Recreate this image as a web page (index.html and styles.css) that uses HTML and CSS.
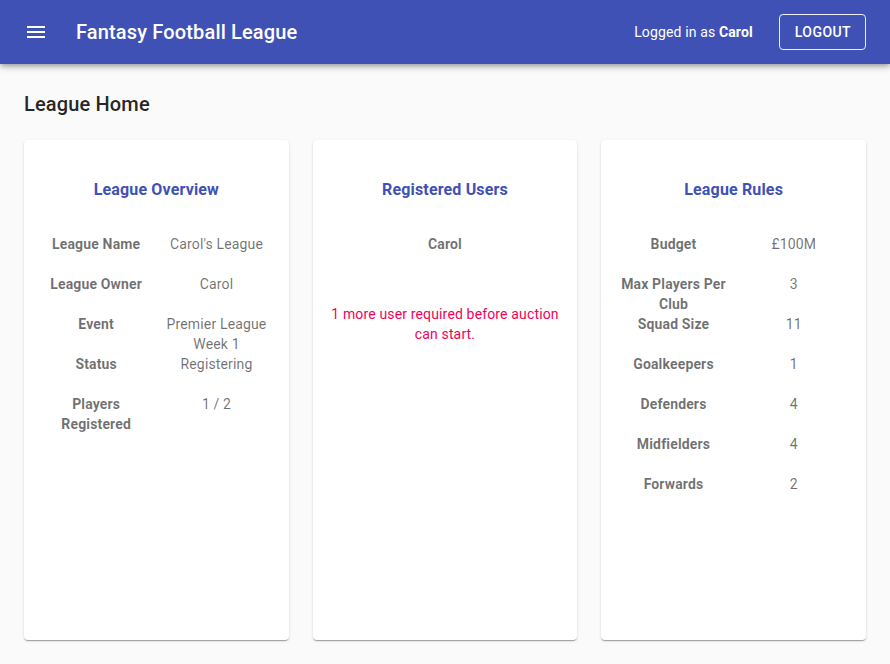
FILE: index.html
```html
<!DOCTYPE html>
<html>
<head>
<meta charset="utf-8">
<link rel="stylesheet" href="styles.css">
</head>
<body>
<header class="appbar">
  <button class="menu-btn" aria-label="menu">
    <svg viewBox="0 0 24 24" width="24" height="24"><path fill="#fff" d="M3 18h18v-2H3v2zm0-5h18v-2H3v2zm0-7v2h18V6H3z"/></svg>
  </button>
  <h1 class="app-title">Fantasy Football League</h1>
  <div class="spacer"></div>
  <span class="logged">Logged in as <b>Carol</b></span>
  <button class="logout">Logout</button>
</header>
<main class="content">
  <h2 class="page-title">League Home</h2>
  <div class="cards">
    <section class="card">
      <h3 class="card-title">League Overview</h3>
      <div class="rows">
        <div class="row"><div class="label">League Name</div><div class="value">Carol's League</div></div>
        <div class="row"><div class="label">League Owner</div><div class="value">Carol</div></div>
        <div class="row"><div class="label">Event</div><div class="value">Premier League Week 1</div></div>
        <div class="row"><div class="label">Status</div><div class="value">Registering</div></div>
        <div class="row"><div class="label">Players Registered</div><div class="value">1 / 2</div></div>
      </div>
    </section>
    <section class="card">
      <h3 class="card-title">Registered Users</h3>
      <div class="rows">
        <div class="row single"><div class="label">Carol</div></div>
      </div>
      <p class="warning">1 more user required before auction can start.</p>
    </section>
    <section class="card">
      <h3 class="card-title">League Rules</h3>
      <div class="rows">
        <div class="row"><div class="label">Budget</div><div class="value">£100M</div></div>
        <div class="row"><div class="label">Max Players Per Club</div><div class="value">3</div></div>
        <div class="row"><div class="label">Squad Size</div><div class="value">11</div></div>
        <div class="row"><div class="label">Goalkeepers</div><div class="value">1</div></div>
        <div class="row"><div class="label">Defenders</div><div class="value">4</div></div>
        <div class="row"><div class="label">Midfielders</div><div class="value">4</div></div>
        <div class="row"><div class="label">Forwards</div><div class="value">2</div></div>
      </div>
    </section>
  </div>
</main>
</body>
</html>
```
FILE: styles.css
```css
* { box-sizing: border-box; }
html, body { margin: 0; padding: 0; }
body {
  background: #fafafa;
  font-family: Roboto, "Liberation Sans", Arial, sans-serif;
  color: rgba(0,0,0,0.87);
  height: 664px;
  overflow: hidden;
}
.appbar {
  height: 64px;
  background: #3f51b5;
  color: #fff;
  display: flex;
  align-items: center;
  padding: 0 24px;
  box-shadow: 0 2px 4px -1px rgba(0,0,0,0.2), 0 4px 5px 0 rgba(0,0,0,0.14), 0 1px 10px 0 rgba(0,0,0,0.12);
  position: relative;
  z-index: 2;
}
.menu-btn {
  width: 48px;
  height: 48px;
  padding: 12px;
  margin-left: -12px;
  margin-right: 16px;
  background: none;
  border: 0;
  display: flex;
  align-items: center;
  justify-content: center;
}
.app-title {
  margin: 0;
  font-size: 20px;
  font-weight: 500;
  letter-spacing: 0.0075em;
  line-height: 32px;
}
.spacer { flex: 1; }
.logged {
  font-size: 14px;
  letter-spacing: 0.01em;
  margin-right: 26px;
}
.logged b { font-weight: 700; }
.logout {
  height: 36px;
  padding: 0 14px 0 15px;
  border: 1px solid rgba(255,255,255,0.9);
  border-radius: 4px;
  background: transparent;
  color: #fff;
  font-family: inherit;
  font-size: 14px;
  font-weight: 500;
  letter-spacing: 0.03em;
  text-transform: uppercase;
}
.content {
  padding: 24px 24px;
}
.page-title {
  margin: 1px 0 0;
  font-size: 20px;
  font-weight: 500;
  line-height: 30px;
  letter-spacing: 0.0075em;
}
.cards {
  margin-top: 21px;
  display: grid;
  grid-template-columns: repeat(3, 1fr);
  gap: 24px;
}
.card {
  height: 500px;
  background: #fff;
  border-radius: 4px;
  box-shadow: 0 2px 1px -1px rgba(0,0,0,0.2), 0 1px 1px 0 rgba(0,0,0,0.14), 0 1px 3px 0 rgba(0,0,0,0.12);
  padding: 40px 12px 16px;
}
.card-title {
  margin: 0;
  text-align: center;
  color: #3f51b5;
  font-size: 16px;
  font-weight: 700;
  line-height: 20px;
  letter-spacing: 0.01em;
}
.rows {
  margin-top: 34px;
  display: flex;
  flex-direction: column;
}
.row {
  height: 40px;
  display: grid;
  grid-template-columns: 1fr 1fr;
  font-size: 14px;
  line-height: 20px;
  letter-spacing: 0.01071em;
  color: rgba(0,0,0,0.56);
  text-align: center;
}
.row.single { grid-template-columns: 1fr; }
.label { font-weight: 700; padding: 0 4px; }
.value { padding: 0 10px; }
.warning {
  margin: 30px 0 0;
  text-align: center;
  color: #f50057;
  font-size: 14px;
  line-height: 20px;
  letter-spacing: 0.01071em;
  padding: 0 4px;
}
```
